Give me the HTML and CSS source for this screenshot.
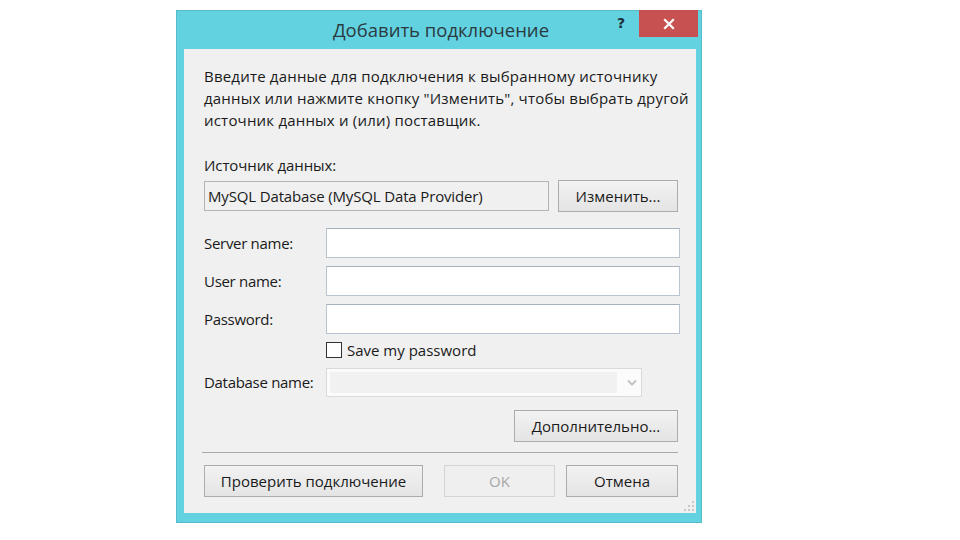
FILE: index.html
```html
<!DOCTYPE html>
<html lang="ru">
<head>
<meta charset="utf-8">
<link rel="stylesheet" href="styles.css">
</head>
<body>
<div class="window">
  <div class="titlebar">
    <div class="title">Добавить подключение</div>
    <div class="help">?</div>
    <div class="close"><svg width="12" height="12" viewBox="0 0 12 12"><path d="M2 2L10 10M10 2L2 10" stroke="#fff" stroke-width="2.2" stroke-linecap="square"/></svg></div>
  </div>
  <div class="client">
    <p class="intro">Введите данные для подключения к выбранному источнику<br>данных или нажмите кнопку "Изменить", чтобы выбрать другой<br>источник данных и (или) поставщик.</p>
    <div class="src-label">Источник данных:</div>
    <div class="src-row">
      <div class="src-box">MySQL Database (MySQL Data Provider)</div>
      <button class="btn btn-change">Изменить...</button>
    </div>
    <div class="form">
      <label class="lbl">Server name:</label>
      <div class="input"></div>
      <label class="lbl">User name:</label>
      <div class="input"></div>
      <label class="lbl">Password:</label>
      <div class="input"></div>
      <div></div>
      <div class="check-row"><span class="checkbox"></span><span>Save my password</span></div>
      <label class="lbl">Database name:</label>
      <div class="combo"><div class="combo-field"></div><svg class="chev" width="10" height="7" viewBox="0 0 10 7"><path d="M1 1.5L5 5.5L9 1.5" stroke="#c4c4c4" stroke-width="2" fill="none"/></svg></div>
    </div>
    <div class="adv-row"><button class="btn btn-adv">Дополнительно...</button></div>
    <div class="sep"></div>
    <div class="bottom-row">
      <button class="btn btn-test">Проверить подключение</button>
      <button class="btn btn-ok" disabled>OK</button>
      <button class="btn btn-cancel">Отмена</button>
    </div>
    <svg class="grip" width="10" height="10" viewBox="0 0 10 10"><g fill="#c8c8c8"><rect x="8" y="0" width="2" height="2"/><rect x="4" y="4" width="2" height="2"/><rect x="8" y="4" width="2" height="2"/><rect x="0" y="8" width="2" height="2"/><rect x="4" y="8" width="2" height="2"/><rect x="8" y="8" width="2" height="2"/></g></svg>
  </div>
</div>
</body>
</html>
```
FILE: styles.css
```css
* { box-sizing: border-box; }
html, body { margin: 0; padding: 0; background: #fff; }
body {
  width: 960px; height: 540px;
  font-family: "Open Sans", "Noto Sans", sans-serif;
  font-size: 15px;
  color: #1a1a1a;
  padding: 10px 0 0 176px;
}
.window {
  width: 526px;
  height: 513px;
  background: #62d2e0;
  border: 1px solid #56bccb;
  padding: 0 5px 9px 7px;
  display: flex;
  flex-direction: column;
}
.titlebar {
  height: 38px;
  position: relative;
  display: flex;
  align-items: center;
  justify-content: center;
}
.title {
  font-size: 18.5px;
  color: #2b3a40;
  margin-top: -1px;
  margin-left: 2px;
}
.help {
  position: absolute;
  left: 433px;
  top: 4px;
  font-family: "DejaVu Sans", sans-serif;
  font-weight: bold;
  font-size: 14px;
  color: #1c2f38;
}
.close {
  position: absolute;
  left: 455px;
  top: -1px;
  width: 59px;
  height: 27px;
  background: #c75050;
  display: flex;
  align-items: center;
  justify-content: center;
}
.client {
  flex: 1;
  background: #f0f0f0;
  padding: 16px 17px 0 20px;
  position: relative;
}
.intro {
  margin: 0;
  line-height: 22px;
  white-space: nowrap;
  letter-spacing: 0.2px;
}
.src-label {
  margin-top: 23px;
  line-height: 22px;
  letter-spacing: -0.1px;
}
.src-row {
  margin-top: 4px;
  display: flex;
  align-items: center;
}
.src-box {
  width: 345px;
  height: 30px;
  border: 1px solid #b4b4b4;
  background: #f0f0f0;
  padding-left: 3px;
  line-height: 28px;
  letter-spacing: -0.15px;
}
.btn {
  font-family: inherit;
  font-size: 15px;
  color: #1a1a1a;
  border: 1px solid #acacac;
  background: linear-gradient(#f2f2f2, #e4e4e4);
  height: 32px;
  padding: 0;
}
.btn-change {
  margin-left: 9px;
  width: 120px;
}
.form {
  margin-top: 16px;
  display: grid;
  grid-template-columns: 122px 354px;
  grid-auto-rows: auto;
  row-gap: 8px;
  align-items: center;
}
.lbl { letter-spacing: -0.3px; }
.input {
  height: 30px;
  background: #fff;
  border: 1px solid #b8c4d2;
  border-top-color: #a8b2bf;
}
.check-row {
  display: flex;
  align-items: center;
  gap: 5px;
  height: 18px;
  margin-top: -1px;
}
.checkbox {
  width: 16px; height: 16px;
  border: 1px solid #333;
  background: #fff;
}
.combo {
  width: 316px;
  height: 29px;
  margin-top: 1px;
  border: 1px solid #dadada;
  background: #fbfbfb;
  display: flex;
  align-items: center;
  padding: 3px;
}
.combo-field {
  width: 287px;
  height: 21px;
  background: #f1f1f1;
}
.chev { margin-left: 10px; }
.adv-row {
  margin-top: 13px;
  display: flex;
  justify-content: flex-end;
  width: 474px;
}
.btn-adv { width: 164px; height: 32px; }
.sep {
  margin-top: 10px;
  width: 476px;
  margin-left: -2px;
  height: 1px;
  background: #a8a8a8;
}
.bottom-row {
  margin-top: 12px;
  display: flex;
  width: 474px;
}
.btn-test { width: 219px; }
.btn-ok {
  width: 111px;
  margin-left: 21px;
  border-color: #d4d4d4;
  background: #efefef;
  color: #a8a8a8;
}
.btn-cancel { width: 112px; margin-left: 11px; }
.grip {
  position: absolute;
  right: 2px;
  bottom: 2px;
}
```
